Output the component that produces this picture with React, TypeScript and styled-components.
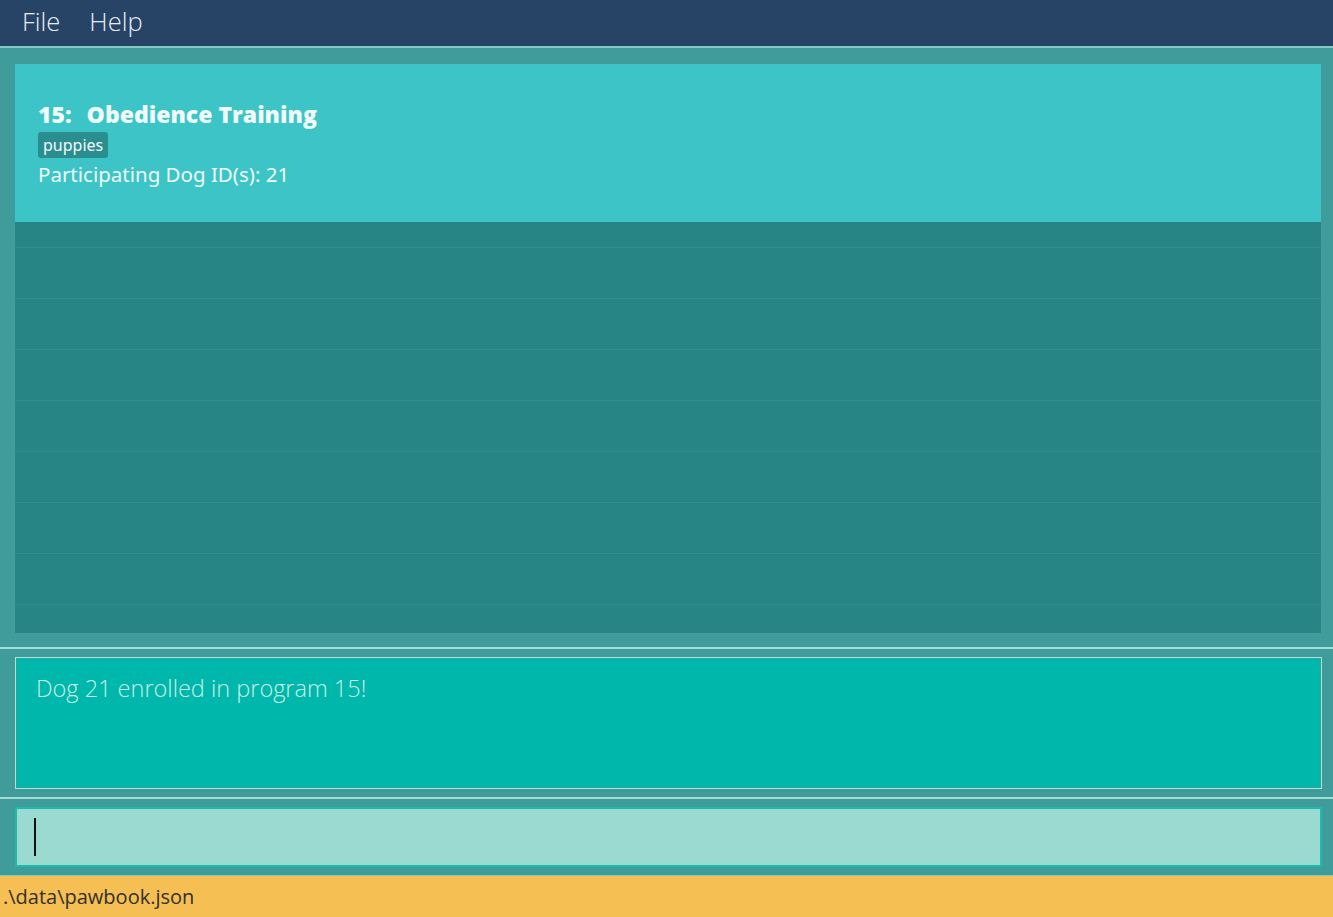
import React from "react";
import styled, { createGlobalStyle } from "styled-components";

const Global = createGlobalStyle`
  html, body { margin: 0; padding: 0; height: 100%; }
  body { font-family: "Noto Sans", "Open Sans", sans-serif; background: #409b9b; overflow: hidden; }
  #root { height: 100%; }
`;

const Window = styled.div`
  width: 1333px;
  height: 917px;
  display: flex;
  flex-direction: column;
  background: #409b9b;
`;

const MenuBar = styled.div`
  height: 46px;
  flex: none;
  background: #274466;
  border-bottom: 2px solid #86c9c4;
  display: flex;
  align-items: center;
  padding-left: 22px;
  gap: 29px;
  box-sizing: content-box;
`;

const MenuItem = styled.span`
  font-family: "Open Sans", sans-serif;
  font-weight: 300;
  font-size: 25.5px;
  color: #e6eef5;
  margin-top: -5px;
`;

const ListSection = styled.div`
  flex: none;
  padding: 16px 12px 14px 15px;
  height: 569px;
  box-sizing: content-box;
`;

const ListPanel = styled.div`
  height: 100%;
  background: #288585;
  display: flex;
  flex-direction: column;
  overflow: hidden;
`;

const Card = styled.div`
  height: 158px;
  flex: none;
  background: #3cc4c7;
  padding: 35px 23px 0;
  box-sizing: border-box;
  display: flex;
  flex-direction: column;
  align-items: flex-start;
  color: #f0fafa;
`;

const Title = styled.div`
  font-family: "Open Sans", sans-serif;
  font-weight: 800;
  font-size: 23px;
  line-height: 31px;
  display: flex;
  gap: 15px;
`;

const Tag = styled.span`
  background: #2a8d8e;
  border-radius: 3px;
  font-size: 16px;
  line-height: 26px;
  padding: 0 5px;
  margin-top: 2px;
  color: #f5fbfb;
`;

const Participants = styled.div`
  font-size: 20.5px;
  line-height: 32px;
`;

const EmptyRow = styled.div<{ $h: number }>`
  height: ${(p) => p.$h}px;
  flex: none;
  border-bottom: 1px solid #2f9090;
  box-sizing: border-box;
`;

const Divider = styled.div`
  height: 2px;
  background: #a3dcd2;
  flex: none;
`;

const ResultSection = styled.div`
  flex: none;
  padding: 8px 11px 8px 15px;
`;

const ResultBox = styled.div`
  height: 132px;
  box-sizing: border-box;
  border: 1px solid #b0e0d8;
  box-shadow: inset 0 0 0 1px #2aa59b;
  background: #00b7ab;
  padding: 13px 20px;
  font-family: "Open Sans", sans-serif;
  font-weight: 300;
  font-size: 23.5px;
  line-height: 34px;
  color: #c9efe8;
`;

const CommandSection = styled.div`
  flex: none;
  padding: 8px 11px 8px 15px;
  border-bottom: 1px solid #7fc7c0;
`;

const CommandBox = styled.div`
  height: 60px;
  box-sizing: border-box;
  border: 2px solid #1cbcad;
  background: #9bdad0;
  display: flex;
  align-items: center;
  padding-left: 17px;
`;

const Caret = styled.div`
  width: 2px;
  height: 38px;
  background: #111;
`;

const StatusBar = styled.div`
  flex: 1;
  background: #f5bf54;
  display: flex;
  align-items: center;
  padding-left: 3px;
  font-family: "Open Sans", sans-serif;
  font-size: 20px;
  color: #33302a;
`;

const rowHeights = [26, 51, 51, 51, 51, 51, 51, 51, 51, 51];

export default function App() {
  return (
    <Window>
      <Global />
      <MenuBar>
        <MenuItem>File</MenuItem>
        <MenuItem>Help</MenuItem>
      </MenuBar>
      <ListSection>
        <ListPanel>
          <Card>
            <Title>
              <span>15:</span>
              <span>Obedience Training</span>
            </Title>
            <Tag>puppies</Tag>
            <Participants>Participating Dog ID(s): 21</Participants>
          </Card>
          {rowHeights.map((h, i) => (
            <EmptyRow key={i} $h={h} />
          ))}
        </ListPanel>
      </ListSection>
      <Divider />
      <ResultSection>
        <ResultBox>Dog 21 enrolled in program 15!</ResultBox>
      </ResultSection>
      <Divider />
      <CommandSection>
        <CommandBox>
          <Caret />
        </CommandBox>
      </CommandSection>
      <StatusBar>.\data\pawbook.json</StatusBar>
    </Window>
  );
}
